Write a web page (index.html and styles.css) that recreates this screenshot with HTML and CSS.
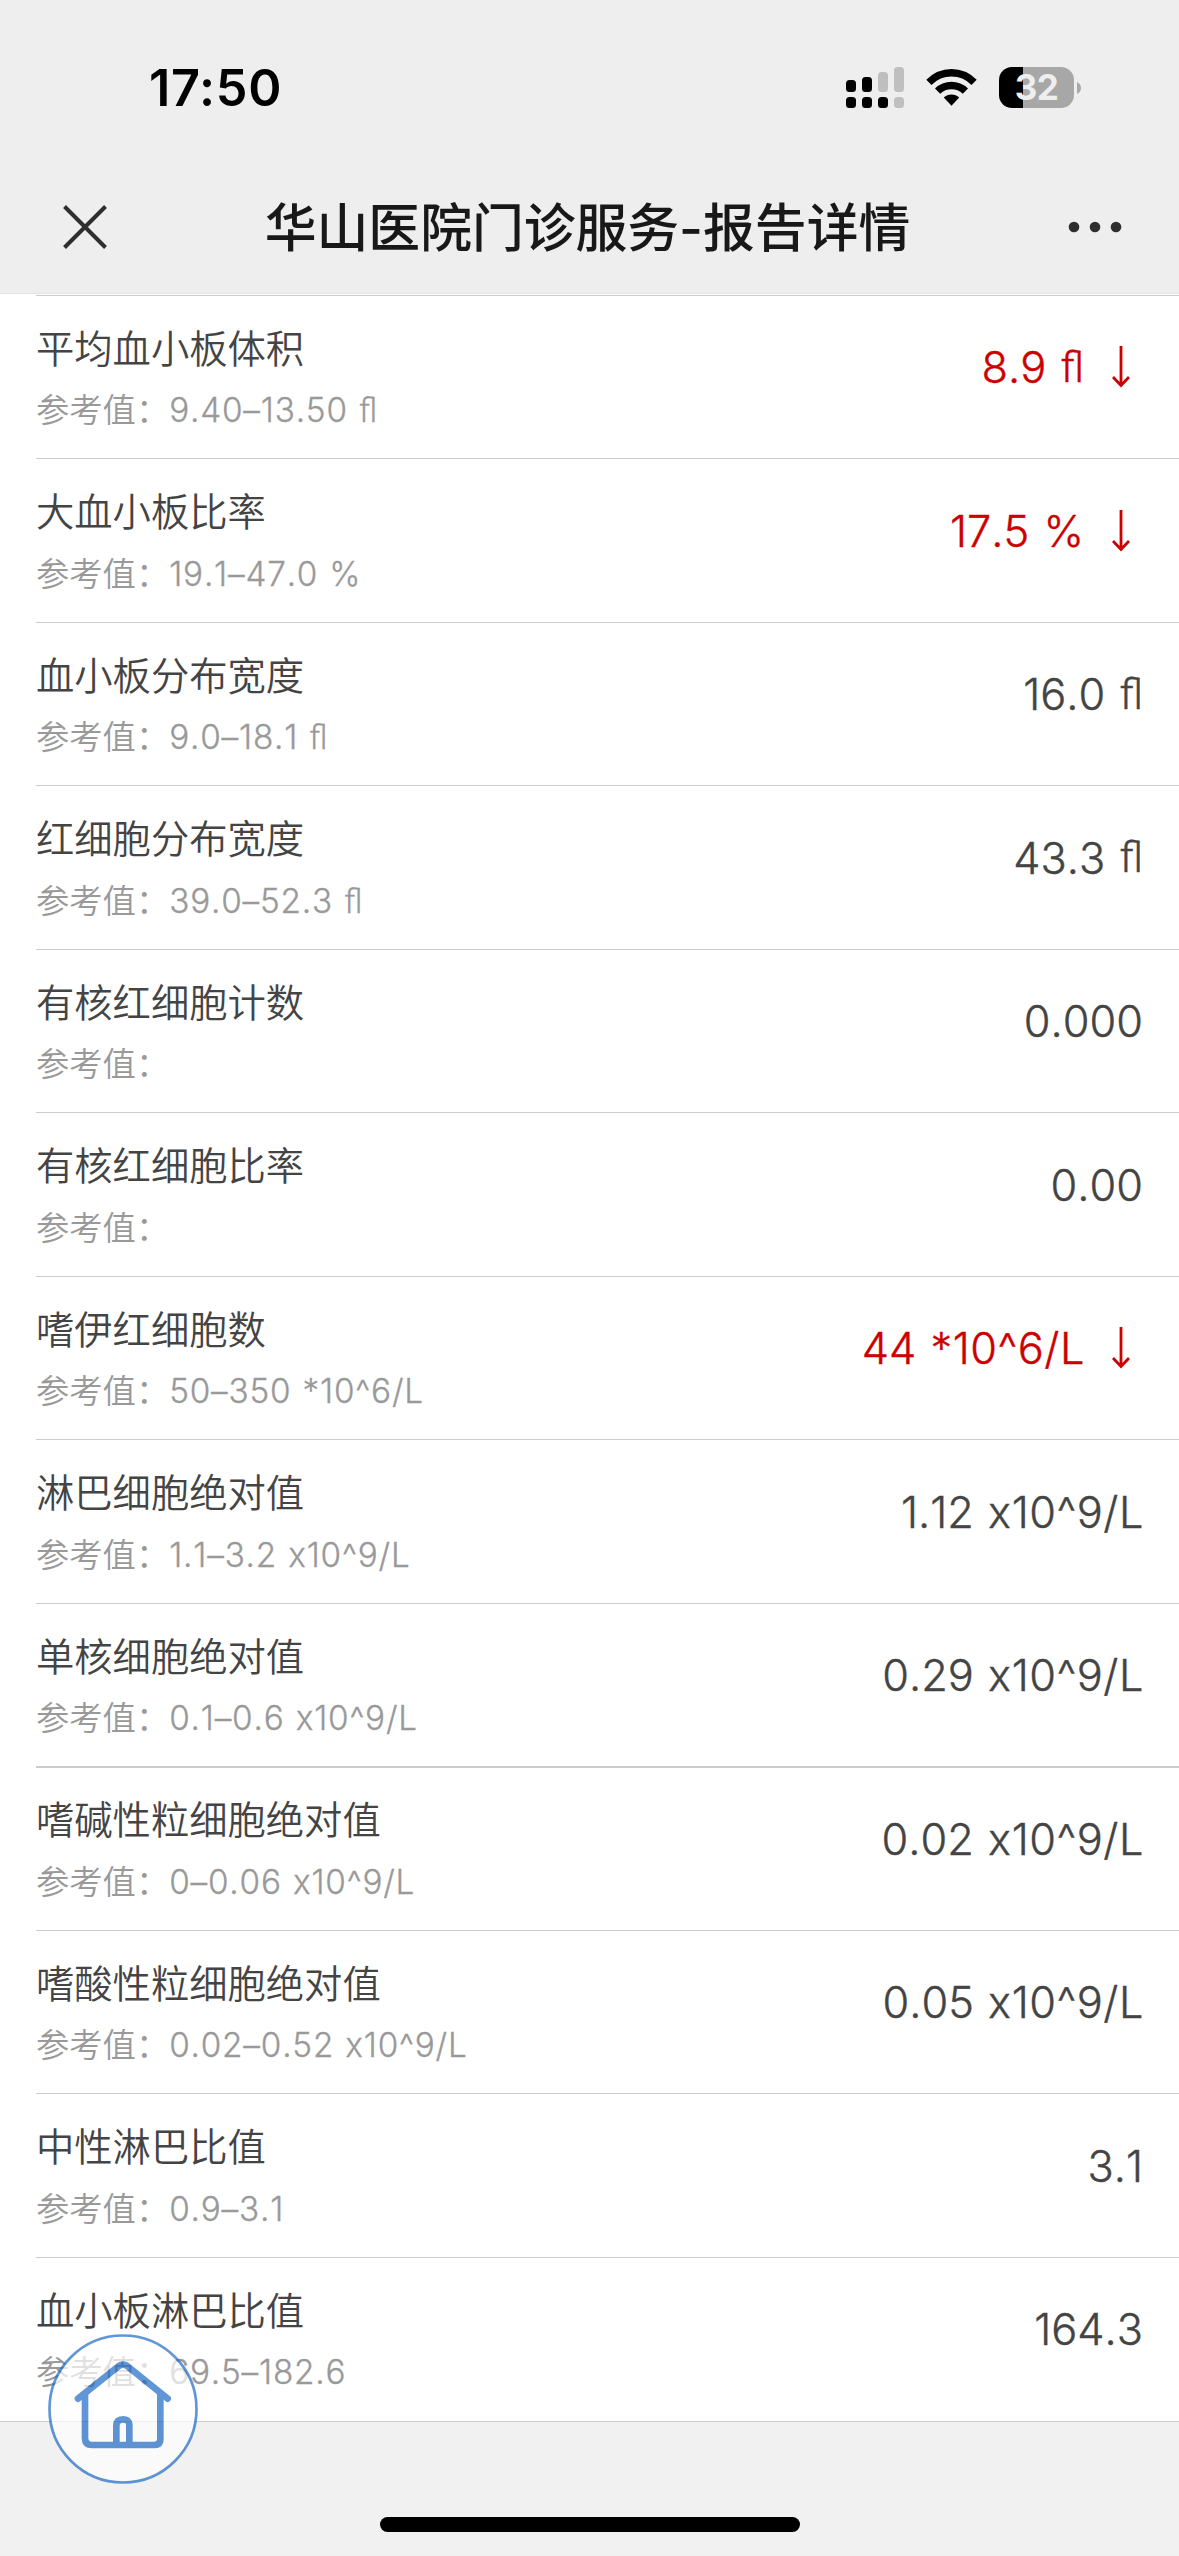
FILE: index.html
```html
<!DOCTYPE html>
<html lang="zh-CN">
<head>
    <meta charset="utf-8">
    <meta name="viewport" content="width=device-width, initial-scale=1.0">
    <title>华山医院门诊服务-报告详情</title>
    <link rel="stylesheet" href="styles.css">
</head>
<body>
    <svg width="0" height="0" class="defs">
        <symbol id="down" viewBox="0 0 18 42">
            <path d="M9 0V39M1 31L9 39.5L17 31" fill="none" stroke="currentColor" stroke-width="2.8"/>
        </symbol>
    </svg>
    <header class="header">
        <div class="status">
            <span class="time">17:50</span>
            <div class="icons">
                <svg class="signal" width="58" height="41" viewBox="0 0 58 41">
                    <rect x="0" y="13" width="10" height="12" rx="3.5"/>
                    <rect x="16" y="10" width="10" height="15" rx="3.5"/>
                    <rect class="off" x="32" y="5" width="10" height="20" rx="3.5"/>
                    <rect class="off" x="48" y="0" width="10" height="25" rx="3.5"/>
                    <rect x="0" y="30" width="10" height="11" rx="3.5"/>
                    <rect x="16" y="30" width="10" height="11" rx="3.5"/>
                    <rect x="32" y="30" width="10" height="11" rx="3.5"/>
                    <rect class="off" x="48" y="30" width="10" height="11" rx="3.5"/>
                </svg>
                <svg class="wifi" width="51" height="37" viewBox="0 0 51 37">
                    <path d="M0.3 10.8Q11 0 25.5 0T50.7 10.8L45.5 16Q37 7.6 25.5 7.6T5.5 16Z"/>
                    <path d="M9 19.5Q16 12.8 25.5 12.8T42 19.5L36.8 24.7Q32 20.3 25.5 20.3T14.2 24.7Z"/>
                    <path d="M17.8 28.6Q21 25.5 25.5 25.5T33.2 28.6L25.5 36.7Z"/>
                </svg>
                <div class="battery">
                    <span class="level">32</span>
                </div>
                <svg class="tip" width="4" height="12" viewBox="0 0 4 12"><path d="M0 0Q4 2 4 6T0 12Z"/></svg>
            </div>
        </div>
        <div class="nav">
            <svg class="close" width="44" height="44" viewBox="0 0 44 44">
                <path d="M1.5 1.5L42.5 42.5M42.5 1.5L1.5 42.5"/>
            </svg>
            <h1 class="title">华山医院门诊服务-报告详情</h1>
            <svg class="more" width="54" height="12" viewBox="0 0 54 12">
                <circle cx="6" cy="6" r="5.3"/>
                <circle cx="27" cy="6" r="5.3"/>
                <circle cx="48" cy="6" r="5.3"/>
            </svg>
        </div>
    </header>
    <main class="list">
        <div class="row">
            <div class="info"><p class="name">平均血小板体积</p><p class="ref"><span class="label">参考值：</span>9.40–13.50 <span class="lig">fl</span></p></div>
            <div class="value low">8.9 <span class="lig">fl</span><svg class="arrow"><use href="#down"/></svg></div>
        </div>
        <div class="row">
            <div class="info"><p class="name">大血小板比率</p><p class="ref"><span class="label">参考值：</span>19.1–47.0 %</p></div>
            <div class="value low">17.5 %<svg class="arrow"><use href="#down"/></svg></div>
        </div>
        <div class="row">
            <div class="info"><p class="name">血小板分布宽度</p><p class="ref"><span class="label">参考值：</span>9.0–18.1 <span class="lig">fl</span></p></div>
            <div class="value">16.0 <span class="lig">fl</span></div>
        </div>
        <div class="row">
            <div class="info"><p class="name">红细胞分布宽度</p><p class="ref"><span class="label">参考值：</span>39.0–52.3 <span class="lig">fl</span></p></div>
            <div class="value">43.3 <span class="lig">fl</span></div>
        </div>
        <div class="row">
            <div class="info"><p class="name">有核红细胞计数</p><p class="ref"><span class="label">参考值：</span></p></div>
            <div class="value">0.000</div>
        </div>
        <div class="row">
            <div class="info"><p class="name">有核红细胞比率</p><p class="ref"><span class="label">参考值：</span></p></div>
            <div class="value">0.00</div>
        </div>
        <div class="row">
            <div class="info"><p class="name">嗜伊红细胞数</p><p class="ref"><span class="label">参考值：</span>50–350 *10^6/L</p></div>
            <div class="value low">44 <span class="unit">*10^6/L</span><svg class="arrow"><use href="#down"/></svg></div>
        </div>
        <div class="row">
            <div class="info"><p class="name">淋巴细胞绝对值</p><p class="ref"><span class="label">参考值：</span>1.1–3.2 x10^9/L</p></div>
            <div class="value">1.12 <span class="unit">x10^9/L</span></div>
        </div>
        <div class="row">
            <div class="info"><p class="name">单核细胞绝对值</p><p class="ref"><span class="label">参考值：</span>0.1–0.6 x10^9/L</p></div>
            <div class="value">0.29 <span class="unit">x10^9/L</span></div>
        </div>
        <div class="row thick">
            <div class="info"><p class="name">嗜碱性粒细胞绝对值</p><p class="ref"><span class="label">参考值：</span>0–0.06 x10^9/L</p></div>
            <div class="value">0.02 <span class="unit">x10^9/L</span></div>
        </div>
        <div class="row">
            <div class="info"><p class="name">嗜酸性粒细胞绝对值</p><p class="ref"><span class="label">参考值：</span>0.02–0.52 x10^9/L</p></div>
            <div class="value">0.05 <span class="unit">x10^9/L</span></div>
        </div>
        <div class="row">
            <div class="info"><p class="name">中性淋巴比值</p><p class="ref"><span class="label">参考值：</span>0.9–3.1</p></div>
            <div class="value">3.1</div>
        </div>
        <div class="row">
            <div class="info"><p class="name">血小板淋巴比值</p><p class="ref"><span class="label">参考值：</span>69.5–182.6</p></div>
            <div class="value">164.3</div>
        </div>
    </main>
    <a class="home">
        <svg width="150" height="150" viewBox="0 0 450 450">
            <circle cx="225" cy="225" r="220.5" fill="#fff" stroke-width="8"/>
            <path d="M90 194L211 97Q225 87 239 97L359 194" stroke-linecap="round"/>
            <path d="M111 178V312Q111 333 132 333H320Q337 333 337 316V178"/>
            <path d="M205 333V276Q205 256 225 256T244 276V333"/>
        </svg>
    </a>
    <div class="indicator"></div>
</body>
</html>
```
FILE: styles.css
```css
* {
    margin: 0;
    padding: 0;
    box-sizing: border-box;
}
body {
    width: 1179px;
    height: 2556px;
    position: relative;
    overflow: hidden;
    background-color: #f1f1f1;
    font-family: Inter, "Noto Sans CJK SC", sans-serif;
}
.defs {
    display: none;
}
.header {
    height: 294px;
    background-color: #eee;
    border-bottom: 1px solid #e2e2e2;
}
.status {
    height: 175px;
    padding: 0 98px 0 149px;
    display: flex;
    justify-content: space-between;
    align-items: center;
}
.time {
    font-size: 50.4px;
    font-weight: 600;
    letter-spacing: 0.7px;
    color: #000;
}
.icons {
    display: flex;
    align-items: center;
}
.off {
    fill: #bfbfbf;
}
.wifi {
    margin: 0 22px;
}
.battery {
    width: 75px;
    height: 41px;
    border-radius: 13px;
    background: linear-gradient(to right, #000 24px, #a7a7a7 24px);
    text-align: center;
}
.level {
    font-size: 35px;
    line-height: 41px;
    font-weight: 700;
    letter-spacing: -0.5px;
    color: #eee;
}
.tip {
    margin-left: 3px;
    fill: #a7a7a7;
}
.nav {
    height: 104px;
    padding: 0 57px 0 63px;
    display: flex;
    justify-content: space-between;
    align-items: center;
}
.close {
    fill: none;
    stroke: #2e2e2e;
    stroke-width: 4;
}
.title {
    padding-top: 2px;
    font-size: 51.8px;
    line-height: 76px;
    font-weight: 500;
    color: #181818;
}
.more {
    fill: #2e2e2e;
}
.list {
    padding: 0.6px 0 0 36px;
    background-color: #fff;
    border-bottom: 1px solid #ccc;
}
.row {
    height: 163.54px;
    padding: 28px 36px 0 0;
    border-top: 1px solid #ccc;
    display: flex;
    justify-content: space-between;
}
.thick {
    padding-top: 27px;
    border-top-width: 2px;
}
.name {
    font-size: 38.3px;
    line-height: 50px;
    font-weight: 350;
    color: #444;
}
.ref {
    margin-top: 11.4px;
    font-size: 33.3px;
    line-height: 50px;
    font-weight: 300;
    letter-spacing: 0.8px;
    word-spacing: 1px;
    font-kerning: none;
    font-feature-settings: "calt" 0;
    -webkit-text-stroke: 0.3px #999;
    color: #999;
}
.label {
    font-weight: 350;
    letter-spacing: 0;
    -webkit-text-stroke: 0;
}
.value {
    height: 87px;
    display: flex;
    align-items: center;
    font-size: 43.3px;
    font-weight: 300;
    word-spacing: 2px;
    font-kerning: none;
    font-feature-settings: "calt" 0;
    white-space: pre;
    -webkit-text-stroke: 0.4px currentColor;
    color: #444;
}
.unit {
    margin-right: -1px;
    letter-spacing: 0.6px;
}
.low {
    color: #c00;
}
.lig {
    font-family: Roboto, sans-serif;
    font-kerning: auto;
    letter-spacing: 0;
}
.arrow {
    width: 18px;
    height: 42px;
    margin: 0 13px 0 28px;
}
.home {
    position: absolute;
    left: 48px;
    top: 2334px;
    width: 150px;
    height: 150px;
    opacity: .7;
}
.home svg {
    fill: none;
    stroke: #1e6bc4;
    stroke-width: 20;
}
.indicator {
    position: absolute;
    left: 380px;
    bottom: 24px;
    width: 420px;
    height: 15px;
    border-radius: 8px;
    background-color: #000;
}
```
